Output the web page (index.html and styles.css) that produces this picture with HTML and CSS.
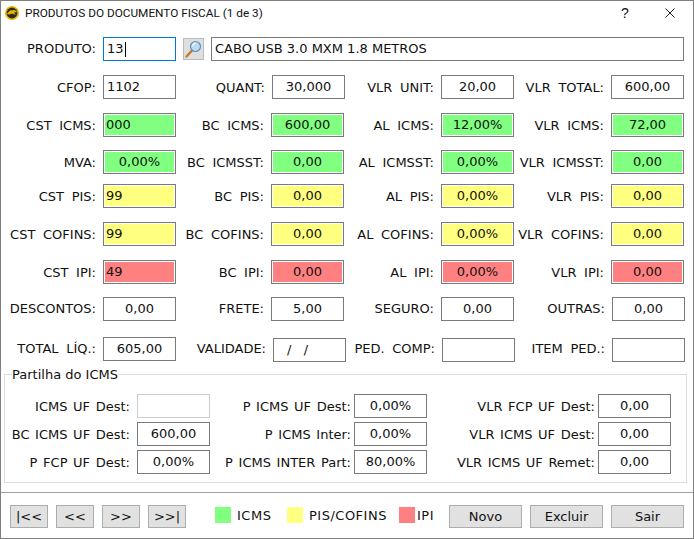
FILE: index.html
```html
<!DOCTYPE html>
<html lang="en">
<head>
    <meta charset="UTF-8">
    <title>Produtos do documento fiscal</title>
    <link rel="stylesheet" href="styles.css">
</head>
<body>
    <div class="window">
        <div class="titlebar">
            <svg class="appIcon" width="14" height="14" viewBox="0 0 14 14">
                <circle cx="7" cy="7" r="7" fill="#e8b800"/>
                <circle cx="7" cy="7" r="5.4" fill="#2b2b2b"/>
                <path d="M1.8 8 L5 4.6 L9.6 4 L12.2 6 L9 6.6 L10.8 9 L7 7.6 L4.4 8.6 Z" fill="#e8b800"/>
            </svg>
            <span class="titleText">PRODUTOS DO DOCUMENTO FISCAL (1 de 3)</span>
            <span class="helpBtn">?</span>
            <svg class="closeBtn" width="10" height="10" viewBox="0 0 10 10">
                <path d="M0.5 0.5 L9.5 9.5 M9.5 0.5 L0.5 9.5" stroke="#222" fill="none"/>
            </svg>
        </div>

        <div class="form">
            <div class="row rowProduto">
                <label>PRODUTO:</label>
                <div class="field focus">13<span class="caret"></span></div>
                <div class="searchBtn">
                    <svg width="18" height="18" viewBox="0 0 18 18">
                        <path d="M1.5 16.5 L7 10.5" stroke="#c77a28" stroke-width="2.4" stroke-linecap="round"/>
                        <circle cx="10.5" cy="6.5" r="5" fill="#bcdcf5" stroke="#5e8fb8" stroke-width="1.2"/>
                        <path d="M7.6 5.8 A3.2 3.2 0 0 1 10.4 3.3" stroke="#fff" stroke-width="1.3" fill="none"/>
                    </svg>
                </div>
                <div class="field descricao">CABO USB 3.0 MXM 1.8 METROS</div>
            </div>

            <div class="row rowCfop">
                <label>CFOP:</label><div class="field">1102</div>
                <label>QUANT:</label><div class="field num">30,000</div>
                <label>VLR UNIT:</label><div class="field num">20,00</div>
                <label>VLR TOTAL:</label><div class="field num">600,00</div>
            </div>

            <div class="row gap13">
                <label>CST ICMS:</label><div class="field green">000</div>
                <label>BC ICMS:</label><div class="field num green">600,00</div>
                <label>AL ICMS:</label><div class="field num green">12,00%</div>
                <label>VLR ICMS:</label><div class="field num green">72,00</div>
            </div>

            <div class="row gap10">
                <label>MVA:</label><div class="field num green">0,00%</div>
                <label>BC ICMSST:</label><div class="field num green">0,00</div>
                <label>AL ICMSST:</label><div class="field num green">0,00%</div>
                <label>VLR ICMSST:</label><div class="field num green">0,00</div>
            </div>

            <div class="row">
                <label>CST PIS:</label><div class="field yellow">99</div>
                <label>BC PIS:</label><div class="field num yellow">0,00</div>
                <label>AL PIS:</label><div class="field num yellow">0,00%</div>
                <label>VLR PIS:</label><div class="field num yellow">0,00</div>
            </div>

            <div class="row">
                <label>CST COFINS:</label><div class="field yellow">99</div>
                <label>BC COFINS:</label><div class="field num yellow">0,00</div>
                <label>AL COFINS:</label><div class="field num yellow">0,00%</div>
                <label>VLR COFINS:</label><div class="field num yellow">0,00</div>
            </div>

            <div class="row gap13">
                <label>CST IPI:</label><div class="field red">49</div>
                <label>BC IPI:</label><div class="field num red">0,00</div>
                <label>AL IPI:</label><div class="field num red">0,00%</div>
                <label>VLR IPI:</label><div class="field num red">0,00</div>
            </div>

            <div class="row rowDescontos">
                <label>DESCONTOS:</label><div class="field num">0,00</div>
                <label>FRETE:</label><div class="field num">5,00</div>
                <label>SEGURO:</label><div class="field num">0,00</div>
                <label>OUTRAS:</label><div class="field num">0,00</div>
            </div>

            <div class="row rowTotal">
                <label>TOTAL LÍQ.:</label><div class="field num">605,00</div>
                <label>VALIDADE:</label><div class="field low validade">/&nbsp;&nbsp;&nbsp;/</div>
                <label>PED. COMP:</label><div class="field low"></div>
                <label>ITEM PED.:</label><div class="field low"></div>
            </div>
        </div>

        <fieldset class="partilha">
            <legend>Partilha do ICMS</legend>
            <div class="partilhaRow">
                <label>ICMS UF Dest:</label><div class="field disabled"></div>
                <label>P ICMS UF Dest:</label><div class="field num">0,00%</div>
                <label>VLR FCP UF Dest:</label><div class="field num">0,00</div>
            </div>
            <div class="partilhaRow">
                <label>BC ICMS UF Dest:</label><div class="field num">600,00</div>
                <label>P ICMS Inter:</label><div class="field num">0,00%</div>
                <label>VLR ICMS UF Dest:</label><div class="field num">0,00</div>
            </div>
            <div class="partilhaRow">
                <label>P FCP UF Dest:</label><div class="field num">0,00%</div>
                <label>P ICMS INTER Part:</label><div class="field num">80,00%</div>
                <label>VLR ICMS UF Remet:</label><div class="field num">0,00</div>
            </div>
        </fieldset>

        <div class="footer">
            <div class="navButtons">
                <button class="btn nav">|&lt;&lt;</button>
                <button class="btn nav">&lt;&lt;</button>
                <button class="btn nav">&gt;&gt;</button>
                <button class="btn nav">&gt;&gt;|</button>
            </div>
            <div class="legendColors">
                <span class="swatch swGreen"></span><span class="swLabel lblIcms">ICMS</span>
                <span class="swatch swYellow"></span><span class="swLabel lblPis">PIS/COFINS</span>
                <span class="swatch swRed"></span><span class="swLabel">IPI</span>
            </div>
            <div class="actions">
                <button class="btn">Novo</button>
                <button class="btn">Excluir</button>
                <button class="btn">Sair</button>
            </div>
        </div>
    </div>
</body>
</html>
```
FILE: styles.css
```css
* {
    box-sizing: border-box;
}

html, body {
    margin: 0px;
    padding: 0px;
}

body {
    width: 694px;
    height: 539px;
    overflow: hidden;
    background-color: #fff;
    font-family: "DejaVu Sans", sans-serif;
    font-size: 13px;
    color: #111;
}

.window {
    width: 694px;
    height: 539px;
    border: 1px solid #7f7f7f;
    display: flex;
    flex-direction: column;
}

.titlebar {
    height: 24px;
    display: flex;
    align-items: center;
    padding-left: 4px;
    font-family: Roboto, sans-serif;
    font-size: 11.8px;
}

.appIcon {
    margin-right: 6px;
}

.titleText {
    flex: 1;
}

.helpBtn {
    width: 8px;
    margin-right: 36px;
    font-family: "Liberation Sans", sans-serif;
    font-size: 14px;
}

.closeBtn {
    margin-right: 18px;
}

.form {
    padding-left: 9px;
    padding-top: 12px;
}

.row {
    display: grid;
    grid-template-columns: 86px 73px 81px 73px 83px 73px 83px 73px;
    column-gap: 7px;
    height: 24px;
    margin-bottom: 14px;
    align-items: center;
}

.row label, .partilhaRow label {
    display: flex;
    justify-content: flex-end;
    white-space: pre;
    word-spacing: 1.5px;
}

.row label {
    word-spacing: 3.5px;
}

.gap13 {
    margin-bottom: 13px;
}

.gap10 {
    margin-bottom: 10px;
}

.rowCfop {
    grid-template-columns: 86px 73px 82px 73px 82px 73px 83px 73px;
}

.rowDescontos {
    grid-template-columns: 86px 73px 81px 73px 83px 73px 84px 73px;
    margin-bottom: 15px;
}

.rowDescontos label {
    padding-bottom: 1px;
}

.rowTotal {
    grid-template-columns: 86px 73px 83px 73px 82px 73px 83px 73px;
    margin-bottom: 7px;
}

.rowTotal label {
    padding-bottom: 1px;
}

.field {
    height: 24px;
    line-height: 22px;
    border: 1px solid #7a7a7a;
    background-color: #fff;
    padding-left: 3px;
    white-space: nowrap;
    overflow: hidden;
}

.num {
    text-align: center;
    padding-left: 0px;
}

.low {
    margin-top: 2px;
}

.validade {
    padding-left: 13px;
}

.focus {
    border-color: #0078d7;
}

.caret {
    display: inline-block;
    width: 1px;
    height: 15px;
    background-color: #000;
    vertical-align: middle;
    margin-left: 1px;
}

.green, .yellow, .red {
    box-shadow: inset 0 0 0 1px #fff;
    padding-left: 2px;
}

.num.green, .num.yellow, .num.red {
    padding-left: 0px;
}

.green {
    background-color: #80ff80;
}

.yellow {
    background-color: #ffff80;
}

.red {
    background-color: #ff8080;
}

.disabled {
    border-color: #ccc;
}

.rowProduto {
    display: flex;
    column-gap: 0px;
}

.rowProduto label {
    width: 86px;
    margin-right: 7px;
    padding-bottom: 2px;
}

.rowProduto .field {
    width: 73px;
}

.rowProduto .descricao {
    width: 473px;
}

.searchBtn {
    width: 21px;
    height: 22px;
    margin: 0px 7px;
    background-color: #dfdfdf;
    border: 1px solid #bbb;
    display: flex;
    align-items: center;
    justify-content: center;
}

.partilha {
    margin: 0px 6px 0px 3px;
    padding: 12px 0px 0px 4px;
    height: 116px;
    border: 1px solid #dcdcdc;
}

.partilha legend {
    padding: 0px;
    margin-left: 3px;
    line-height: 15px;
}

.partilhaRow {
    display: grid;
    grid-template-columns: 128px 73px 144px 73px 171px 73px;
    height: 24px;
    margin-bottom: 4px;
    align-items: center;
}

.partilhaRow label {
    padding-right: 3px;
}

.partilhaRow label:first-child {
    padding-right: 7px;
}

.footer {
    margin-top: 9px;
    border-top: 1px solid #a0a0a0;
    padding: 12px 9px 0px 9px;
    display: flex;
    align-items: flex-start;
}

.navButtons {
    display: flex;
    gap: 8px;
}

.btn {
    width: 73px;
    height: 23px;
    background-color: #e1e1e1;
    border: 1px solid #adadad;
    font-family: "DejaVu Sans", sans-serif;
    font-size: 13px;
    color: #111;
    padding: 0px;
}

.btn.nav {
    width: 38px;
}

.legendColors {
    display: flex;
    align-items: center;
    margin-left: 29px;
    height: 20px;
}

.swLabel {
    letter-spacing: 0.5px;
}

.swatch {
    width: 16px;
    height: 16px;
    margin-right: 6px;
}

.swGreen {
    background-color: #80ff80;
}

.swYellow {
    background-color: #ffff80;
}

.swRed {
    background-color: #ff8080;
    margin-right: 2px;
}

.lblIcms {
    width: 50px;
}

.lblPis {
    width: 90px;
}

.actions {
    display: flex;
    gap: 8px;
    margin-left: auto;
}
```
